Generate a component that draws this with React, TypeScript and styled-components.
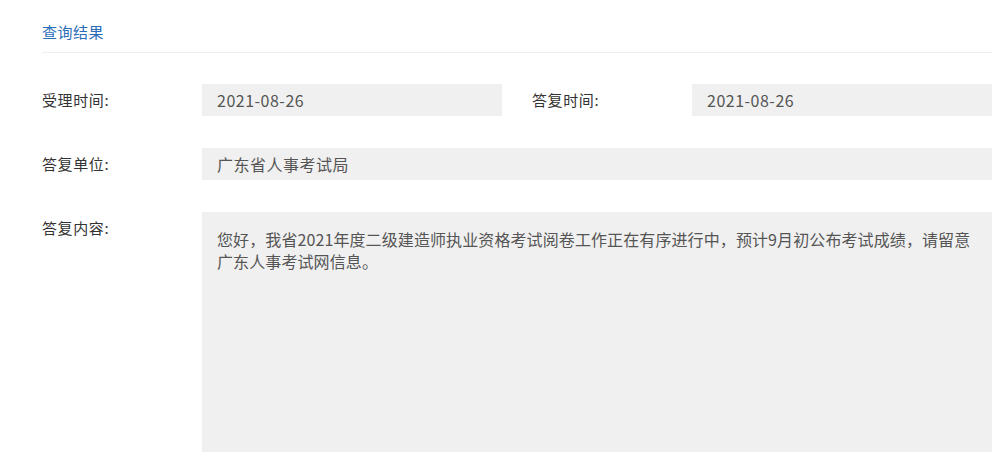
import React from "react";
import styled, { createGlobalStyle } from "styled-components";

const GlobalStyle = createGlobalStyle`
  html, body {
    margin: 0;
    padding: 0;
    background: #ffffff;
  }
  body {
    font-family: "Noto Sans CJK SC", "Noto Sans", "Liberation Sans", sans-serif;
    font-size: 15px;
    color: #333333;
  }
`;

const Page = styled.div`
  width: 1004px;
  box-sizing: border-box;
  padding: 0 12px 16px 42px;
`;

const Header = styled.div`
  padding-top: 22px;
  padding-bottom: 10px;
  border-bottom: 1px solid #eeeeee;
`;

const Title = styled.h2`
  margin: 0;
  font-size: 15px;
  font-weight: normal;
  line-height: 20px;
  letter-spacing: 0.5px;
  color: #2a6db8;
`;

const Form = styled.div`
  margin-top: 31px;
  display: flex;
  flex-direction: column;
  gap: 32px;
`;

const Row = styled.div`
  display: flex;
  align-items: flex-start;
`;

const Label = styled.div<{ $offset?: number }>`
  width: 160px;
  flex: none;
  line-height: 32px;
  font-size: 15px;
  letter-spacing: 0.6px;
  color: #333333;
  margin-left: ${(p) => p.$offset ?? 0}px;
`;

const Field = styled.div<{ $wide?: boolean }>`
  box-sizing: border-box;
  width: ${(p) => (p.$wide ? "790px" : "300px")};
  height: 32px;
  padding: 0 15px;
  background: #f0f0f0;
  color: #555555;
  font-size: 16px;
  letter-spacing: 0.5px;
  line-height: 32px;
`;

const TextArea = styled.div`
  box-sizing: border-box;
  width: 790px;
  height: 240px;
  padding: 16px 15px;
  background: #f0f0f0;
  color: #555555;
  font-size: 16px;
  letter-spacing: 0.1px;
  line-height: 22px;
`;

export default function App() {
  return (
    <>
      <GlobalStyle />
      <Page>
        <Header>
          <Title>查询结果</Title>
        </Header>
        <Form>
          <Row>
            <Label>受理时间:</Label>
            <Field>2021-08-26</Field>
            <Label $offset={30}>答复时间:</Label>
            <Field>2021-08-26</Field>
          </Row>
          <Row>
            <Label>答复单位:</Label>
            <Field $wide>广东省人事考试局</Field>
          </Row>
          <Row>
            <Label>答复内容:</Label>
            <TextArea>
              您好，我省2021年度二级建造师执业资格考试阅卷工作正在有序进行中，预计9月初公布考试成绩，请留意广东人事考试网信息。
            </TextArea>
          </Row>
        </Form>
      </Page>
    </>
  );
}
